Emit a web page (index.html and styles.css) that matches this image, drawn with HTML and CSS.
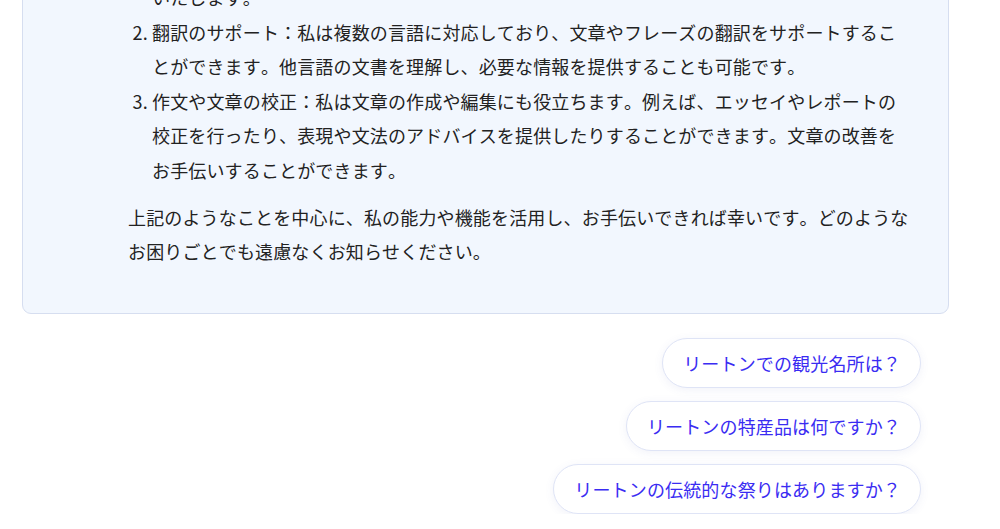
FILE: index.html
```html
<!DOCTYPE html>
<html lang="ja">
<head>
<meta charset="utf-8">
<title>チャット</title>
<link rel="stylesheet" href="styles.css">
</head>
<body>
<main class="chat">
  <section class="bubble">
    <ol class="answer-list">
      <li>情報の提供：私は幅広い分野の知識を持っており、さまざまな質問に対して正確で分かりやすい情報をお届けします。歴史や科学、文化など、どのような話題でも丁寧に詳しくお答えいたします。</li>
      <li>翻訳のサポート：私は複数の言語に対応しており、文章やフレーズの翻訳をサポートすることができます。他言語の文書を理解し、必要な情報を提供することも可能です。</li>
      <li>作文や文章の校正：私は文章の作成や編集にも役立ちます。例えば、エッセイやレポートの校正を行ったり、表現や文法のアドバイスを提供したりすることができます。文章の改善をお手伝いすることができます。</li>
    </ol>
    <p class="closing">上記のようなことを中心に、私の能力や機能を活用し、お手伝いできれば幸いです。どのようなお困りごとでも遠慮なくお知らせください。</p>
  </section>
  <div class="suggestions">
    <button class="chip">リートンでの観光名所は？</button>
    <button class="chip">リートンの特産品は何ですか？</button>
    <button class="chip">リートンの伝統的な祭りはありますか？</button>
  </div>
</main>
</body>
</html>
```

FILE: styles.css
```css
html, body {
  margin: 0;
  padding: 0;
  background: #ffffff;
  overflow: hidden;
}

body {
  font-family: "Noto Sans CJK JP", "Noto Sans", sans-serif;
  color: #222222;
  font-kerning: none;
  font-feature-settings: "kern" 0;
}

.chat {
  padding: 0 51px 0 22px;
  display: flex;
  flex-direction: column;
}

.bubble {
  margin-top: -114px;
  background: #f2f7fe;
  border: 1px solid #d6def0;
  border-radius: 9px;
  padding: 24px 36px 44px 105px;
  font-size: 18px;
  line-height: 34.5px;
  letter-spacing: 0.15px;
}

.answer-list {
  margin: 0;
  padding: 0 0 0 24px;
}

.closing {
  margin: 12.5px 0 0 0;
}

.suggestions {
  display: flex;
  flex-direction: column;
  align-items: flex-end;
  gap: 13px;
  margin-top: 24px;
  padding-right: 28px;
}

.chip {
  font-family: "Noto Sans CJK JP", "Noto Sans", sans-serif;
  font-kerning: none;
  font-feature-settings: "kern" 0;
  font-size: 18px;
  line-height: 24px;
  letter-spacing: 0.15px;
  color: #3a2cf2;
  background: #ffffff;
  border: 1px solid #dfe4f6;
  border-radius: 25px;
  padding: 12px 19px 12px 20px;
  box-shadow: 0 2px 10px rgba(80, 90, 180, 0.08);
  cursor: pointer;
}
```
